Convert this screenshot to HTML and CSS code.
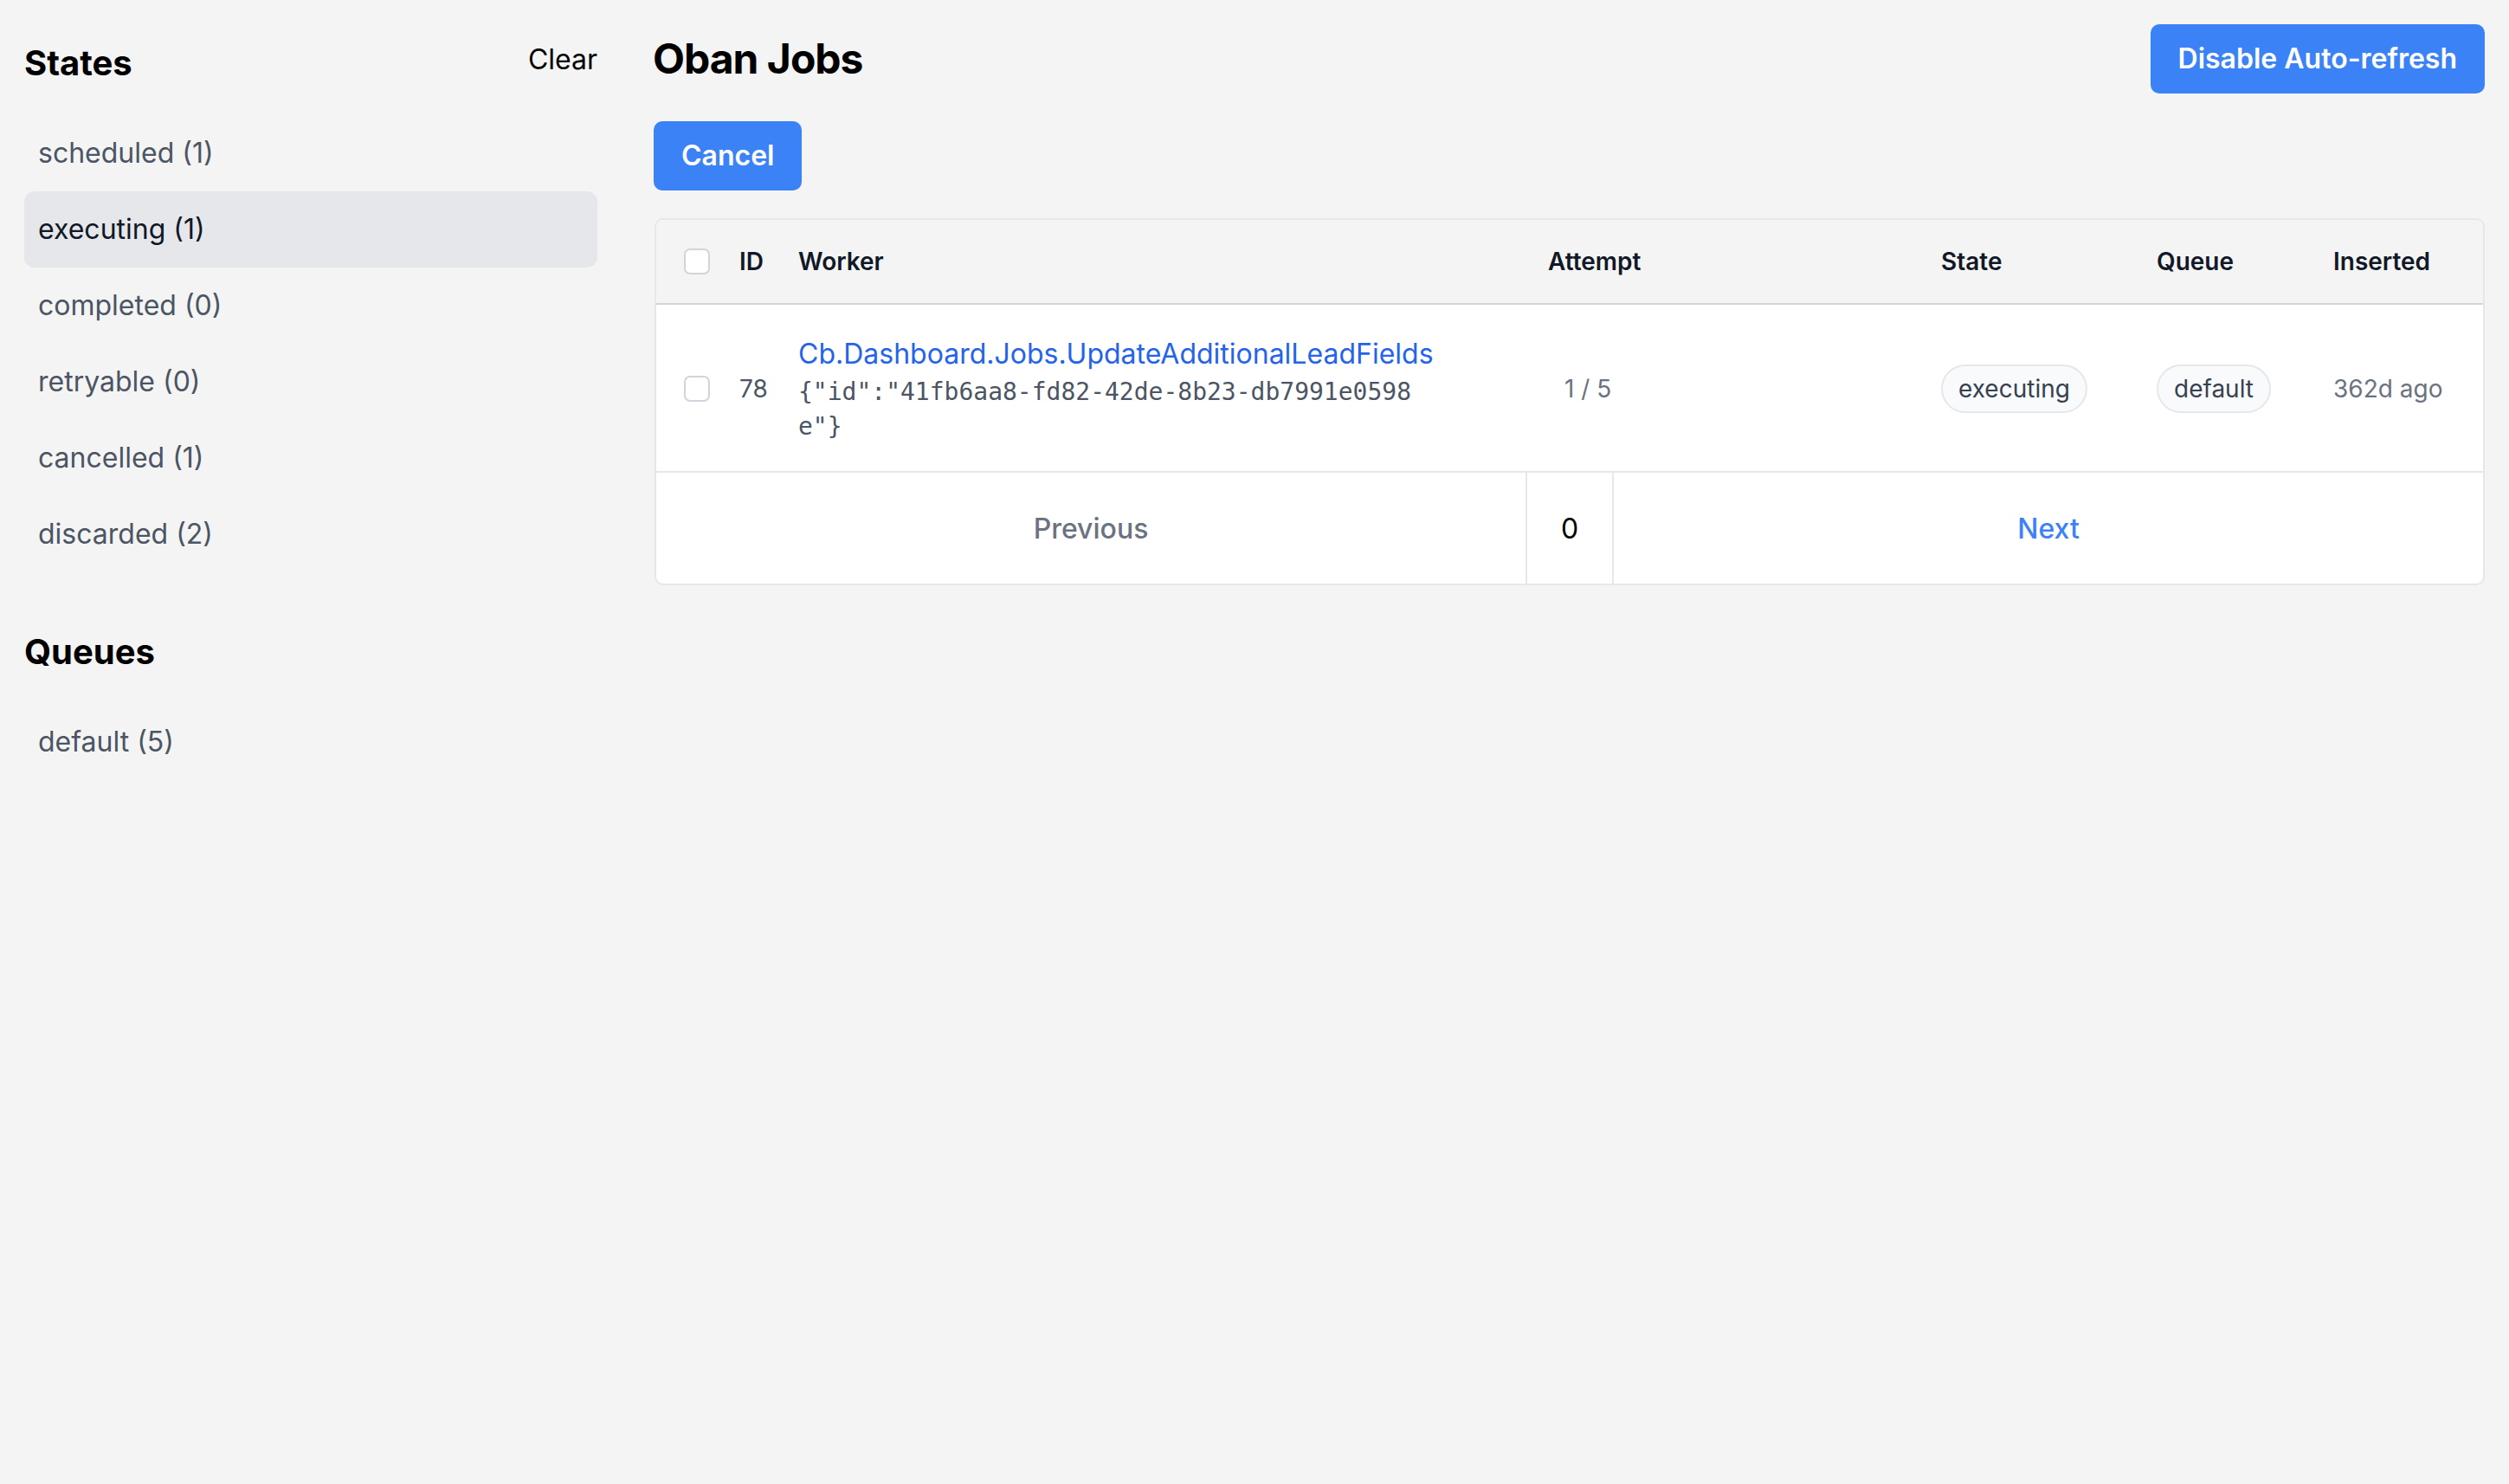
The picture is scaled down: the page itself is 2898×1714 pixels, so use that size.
FILE: index.html
```html
<!DOCTYPE html>
<html lang="en">
<head>
<meta charset="utf-8">
<title>Oban Jobs</title>
<link rel="stylesheet" href="styles.css">
</head>
<body>
<div class="page">
  <aside class="sidebar">
    <div class="side-head">
      <h2 class="side-title">States</h2>
      <a class="clear" href="#">Clear</a>
    </div>
    <ul class="side-list">
      <li class="side-item">scheduled (1)</li>
      <li class="side-item active">executing (1)</li>
      <li class="side-item">completed (0)</li>
      <li class="side-item">retryable (0)</li>
      <li class="side-item">cancelled (1)</li>
      <li class="side-item">discarded (2)</li>
    </ul>
    <h2 class="side-title queues-title">Queues</h2>
    <ul class="side-list">
      <li class="side-item">default (5)</li>
    </ul>
  </aside>
  <main class="main">
    <div class="main-head">
      <h1 class="title">Oban Jobs</h1>
      <button class="btn">Disable Auto-refresh</button>
    </div>
    <div class="actions">
      <button class="btn">Cancel</button>
    </div>
    <div class="card">
      <table class="jobs">
        <colgroup>
          <col class="c-check">
          <col class="c-id">
          <col class="c-worker">
          <col class="c-attempt">
          <col class="c-state">
          <col class="c-queue">
          <col class="c-inserted">
        </colgroup>
        <thead>
          <tr>
            <th class="cell-check"><span class="checkbox"></span></th>
            <th>ID</th>
            <th>Worker</th>
            <th class="th-attempt">Attempt</th>
            <th>State</th>
            <th>Queue</th>
            <th>Inserted</th>
          </tr>
        </thead>
        <tbody>
          <tr>
            <td class="cell-check"><span class="checkbox"></span></td>
            <td class="muted-dark">78</td>
            <td class="cell-worker">
              <a class="worker-link" href="#">Cb.Dashboard.Jobs.UpdateAdditionalLeadFields</a>
              <div class="args">{"id":"41fb6aa8-fd82-42de-8b23-db7991e0598e"}</div>
            </td>
            <td class="td-attempt muted">1 / 5</td>
            <td><span class="badge">executing</span></td>
            <td><span class="badge">default</span></td>
            <td class="muted">362d ago</td>
          </tr>
        </tbody>
      </table>
      <div class="pager">
        <a class="pager-prev" href="#">Previous</a>
        <span class="pager-page">0</span>
        <a class="pager-next" href="#">Next</a>
      </div>
    </div>
  </main>
</div>
</body>
</html>
```
FILE: styles.css
```css
* { box-sizing: border-box; }

html, body {
  margin: 0;
  padding: 0;
  background: #f4f4f4;
  font-family: Inter, "Noto Sans", "Liberation Sans", sans-serif;
  color: #111827;
}

.page {
  display: flex;
  gap: 66px;
  padding: 28px;
  min-height: 1714px;
}

/* Sidebar */
.sidebar {
  width: 662px;
  flex: none;
  padding-top: 17px;
}

.side-head {
  display: flex;
  justify-content: space-between;
  align-items: flex-start;
}

.side-title {
  margin: 0;
  font-size: 40px;
  line-height: 56px;
  font-weight: 700;
  color: #000;
}

.queues-title {
  margin-top: 64px;
}

.clear {
  font-size: 32px;
  line-height: 48px;
  color: #000;
  text-decoration: none;
}

.side-list {
  list-style: none;
  margin: 32px 0 0;
  padding: 0;
}

.side-item {
  padding: 20px 16px;
  font-size: 32px;
  line-height: 48px;
  color: #4b5563;
  border-radius: 12px;
}

.side-item.active {
  background: #e5e7eb;
  color: #111827;
}

/* Main */
.main {
  flex: 1;
  min-width: 0;
}

.main-head {
  display: flex;
  justify-content: space-between;
  align-items: center;
  height: 80px;
}

.title {
  margin: 0 0 0 -2px;
  font-size: 48px;
  line-height: 64px;
  font-weight: 700;
  letter-spacing: -1px;
  color: #000;
}

.btn {
  font-family: inherit;
  background: #3b82f6;
  color: #fff;
  border: none;
  border-radius: 10px;
  padding: 16px 32px;
  font-size: 32px;
  line-height: 48px;
  font-weight: 600;
}

.actions {
  margin-top: 32px;
}

.actions .btn {
  margin-left: -1px;
}

.card {
  margin-top: 32px;
  border: 2px solid #e5e7eb;
  border-radius: 10px;
  overflow: hidden;
  background: #fff;
}

.jobs {
  width: 100%;
  table-layout: fixed;
  border-collapse: collapse;
}

.c-check { width: 80px; }
.c-id { width: 68px; }
.c-worker { width: 772px; }
.c-attempt { width: 548px; }
.c-state { width: 249px; }
.c-queue { width: 204px; }
.c-inserted { width: auto; }

.jobs th {
  background: #f4f4f4;
  text-align: left;
  font-size: 28px;
  line-height: 40px;
  font-weight: 600;
  color: #111827;
  padding: 28px 16px;
  border-bottom: 2px solid #d1d5db;
  white-space: nowrap;
}

.jobs td {
  font-size: 28px;
  line-height: 40px;
  padding: 33px 16px 31px;
  vertical-align: middle;
  border-bottom: 2px solid #e5e7eb;
  white-space: nowrap;
}

.jobs .cell-check {
  padding-left: 32px;
  padding-right: 0;
}

.checkbox {
  display: block;
  width: 30px;
  height: 30px;
  border: 2px solid #d1d5db;
  border-radius: 7px;
  background: #fff;
}

.jobs th.th-attempt { padding-left: 110px; }
.jobs td.td-attempt { padding-left: 129px; }

.jobs td.cell-worker {
  white-space: normal;
  vertical-align: top;
}

.worker-link {
  display: block;
  font-size: 32px;
  line-height: 48px;
  color: #2563eb;
  text-decoration: none;
  white-space: nowrap;
}

.args {
  font-family: "DejaVu Sans Mono", "Liberation Mono", monospace;
  font-size: 28px;
  line-height: 40px;
  color: #4b5563;
  width: 740px;
  word-break: break-all;
}

.muted { color: #6b7280; }
.muted-dark { color: #4b5563; }

.badge {
  display: inline-block;
  padding: 6px 18px;
  border: 2px solid #e5e7eb;
  border-radius: 9999px;
  background: #f9fafb;
  color: #374151;
  font-size: 28px;
  line-height: 40px;
}

.pager {
  display: flex;
  align-items: stretch;
}

.pager a,
.pager span {
  display: flex;
  align-items: center;
  justify-content: center;
  padding: 41px 0 39px;
  font-size: 32px;
  line-height: 48px;
  text-decoration: none;
}

.pager-prev {
  flex: 1;
  color: #6b7280;
  font-weight: 500;
}

.pager-next {
  flex: 1;
  color: #3b82f6;
  font-weight: 500;
}

.pager-page {
  width: 102px;
  flex: none;
  color: #000;
  border-left: 2px solid #e5e7eb;
  border-right: 2px solid #e5e7eb;
}
```
